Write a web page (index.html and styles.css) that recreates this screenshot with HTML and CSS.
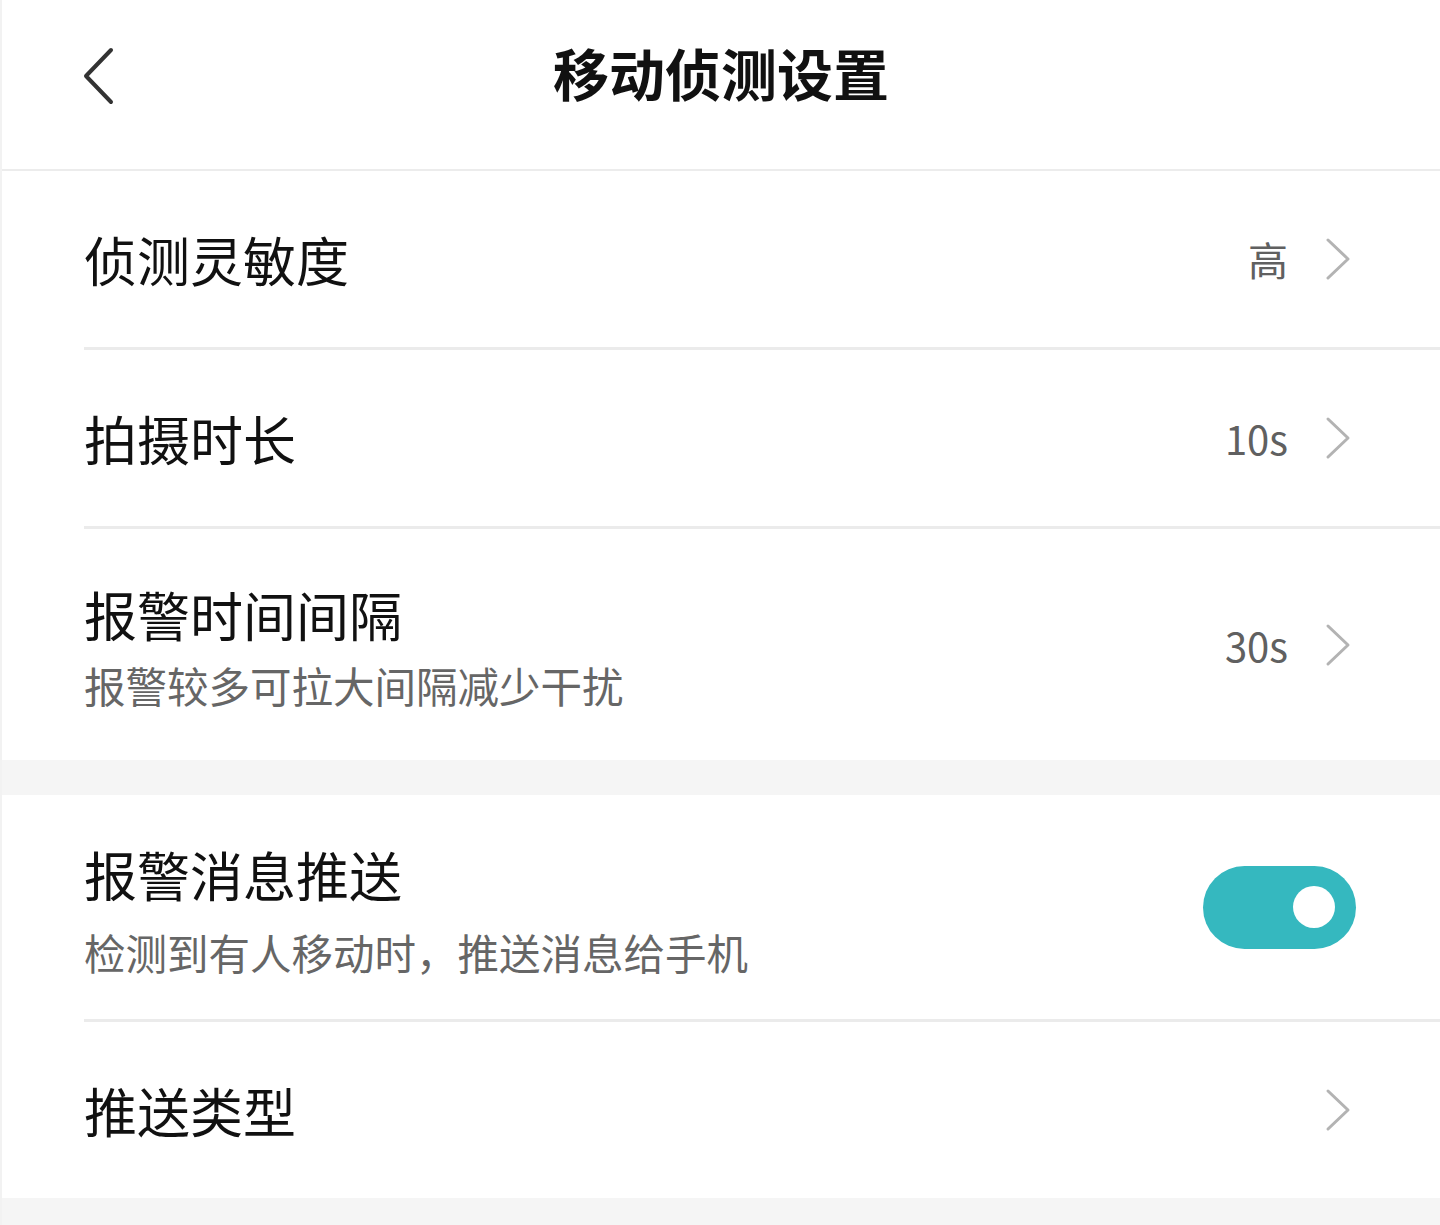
FILE: index.html
```html
<!DOCTYPE html>
<html>

<head>
    <meta charset="UTF-8">
    <title>移动侦测设置</title>
    <link rel="stylesheet" href="styles.css">
</head>

<body>
    <div class="page">
        <div class="header">
            <span class="back">
                <svg width="40" height="60" viewBox="0 0 40 60">
                    <path d="M30 4 L5 30 L30 56" fill="none" stroke="#333" stroke-width="4" stroke-linecap="round" stroke-linejoin="round"/>
                </svg>
            </span>
            <div class="title">移动侦测设置</div>
        </div>

        <div class="group">
            <div class="row">
                <div class="text">
                    <div class="label">侦测灵敏度</div>
                </div>
                <div class="right">
                    <span class="value">高</span>
                    <svg class="arrow" width="26" height="44" viewBox="0 0 26 44">
                        <path d="M3 3 L23 22 L3 41" fill="none" stroke="#b3b3b3" stroke-width="3" stroke-linecap="round" stroke-linejoin="round"/>
                    </svg>
                </div>
            </div>
            <div class="line"></div>
            <div class="row">
                <div class="text">
                    <div class="label">拍摄时长</div>
                </div>
                <div class="right">
                    <span class="value">10s</span>
                    <svg class="arrow" width="26" height="44" viewBox="0 0 26 44">
                        <path d="M3 3 L23 22 L3 41" fill="none" stroke="#b3b3b3" stroke-width="3" stroke-linecap="round" stroke-linejoin="round"/>
                    </svg>
                </div>
            </div>
            <div class="line"></div>
            <div class="row tall" id="interval">
                <div class="text">
                    <div class="label">报警时间间隔</div>
                    <div class="sub">报警较多可拉大间隔减少干扰</div>
                </div>
                <div class="right">
                    <span class="value">30s</span>
                    <svg class="arrow" width="26" height="44" viewBox="0 0 26 44">
                        <path d="M3 3 L23 22 L3 41" fill="none" stroke="#b3b3b3" stroke-width="3" stroke-linecap="round" stroke-linejoin="round"/>
                    </svg>
                </div>
            </div>
        </div>

        <div class="gap"></div>

        <div class="group">
            <div class="row tall" id="push">
                <div class="text">
                    <div class="label">报警消息推送</div>
                    <div class="sub">检测到有人移动时，推送消息给手机</div>
                </div>
                <div class="right">
                    <div class="toggle on"><span class="knob"></span></div>
                </div>
            </div>
            <div class="line"></div>
            <div class="row">
                <div class="text">
                    <div class="label">推送类型</div>
                </div>
                <div class="right">
                    <svg class="arrow" width="26" height="44" viewBox="0 0 26 44">
                        <path d="M3 3 L23 22 L3 41" fill="none" stroke="#b3b3b3" stroke-width="3" stroke-linecap="round" stroke-linejoin="round"/>
                    </svg>
                </div>
            </div>
        </div>

        <div class="gap bottom"></div>
    </div>
</body>
</html>
```

FILE: styles.css
```css
* {
    box-sizing: border-box;
    font-family: 'Noto Sans CJK SC', 'Noto Sans', sans-serif;
}
body {
    margin: 0;
    background: #ffffff;
}
.page {
    width: 1440px;
    min-height: 1225px;
    border-left: 2px solid #f2f2f2;
    background: #ffffff;
}
.header {
    position: relative;
    height: 171px;
    border-bottom: 2px solid #ececec;
    display: flex;
    justify-content: center;
    padding-top: 35px;
}
.back {
    position: absolute;
    left: 79px;
    top: 46px;
    width: 40px;
    height: 60px;
}
.title {
    font-size: 56px;
    font-weight: 700;
    line-height: 74px;
    color: #111;
}
.group {
    background: #ffffff;
}
.row {
    display: flex;
    align-items: center;
    justify-content: space-between;
    height: 176px;
    padding: 0 89px 0 82px;
}
#interval {
    height: 231px;
}
#push {
    height: 224px;
}
#interval .text {
    padding-top: 4px;
}
#interval .sub {
    margin-top: 9px;
}
#push .text {
    padding-top: 6px;
}
#push .sub {
    margin-top: 16px;
}
.label {
    font-size: 53px;
    line-height: 68px;
    color: #111;
}
.sub {
    font-size: 41.5px;
    line-height: 56px;
    color: #666;
}
.right {
    display: flex;
    align-items: center;
}
.value {
    font-size: 40px;
    color: #606060;
    margin-right: 37px;
}
.arrow {
    display: block;
}
.line {
    height: 3px;
    margin-left: 82px;
    background: #ebebeb;
}
.gap {
    height: 35px;
    background: #f5f5f5;
}
.gap.bottom {
    height: 27px;
}
.toggle {
    width: 153px;
    height: 83px;
    border-radius: 42px;
    background: #35b8bf;
    display: flex;
    align-items: center;
    justify-content: flex-end;
    padding-right: 21px;
    margin-right: -5px;
}
.knob {
    width: 42px;
    height: 42px;
    border-radius: 50%;
    background: #ffffff;
}
```
